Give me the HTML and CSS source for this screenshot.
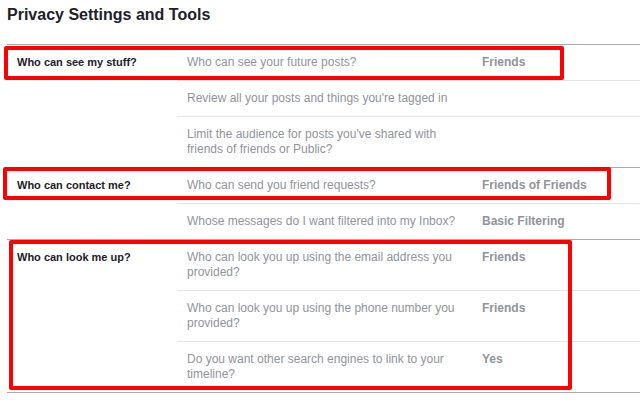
FILE: index.html
```html
<!DOCTYPE html>
<html lang="en">
<head>
<meta charset="utf-8">
<title>Privacy Settings and Tools</title>
<link rel="stylesheet" href="styles.css">
</head>
<body>
<div class="page">
  <h1 class="page-title">Privacy Settings and Tools</h1>

  <section class="group">
    <div class="group-label">Who can see my stuff?</div>
    <div class="items">
      <div class="item">
        <div class="item-text">Who can see your future posts?</div>
        <div class="item-value">Friends</div>
      </div>
      <div class="item">
        <div class="item-text">Review all your posts and things you're tagged in</div>
        <div class="item-value"></div>
      </div>
      <div class="item">
        <div class="item-text">Limit the audience for posts you've shared with friends of friends or Public?</div>
        <div class="item-value"></div>
      </div>
    </div>
  </section>

  <section class="group">
    <div class="group-label">Who can contact me?</div>
    <div class="items">
      <div class="item">
        <div class="item-text">Who can send you friend requests?</div>
        <div class="item-value">Friends of Friends</div>
      </div>
      <div class="item">
        <div class="item-text">Whose messages do I want filtered into my Inbox?</div>
        <div class="item-value">Basic Filtering</div>
      </div>
    </div>
  </section>

  <section class="group group-last">
    <div class="group-label">Who can look me up?</div>
    <div class="items">
      <div class="item">
        <div class="item-text">Who can look you up using the email address you provided?</div>
        <div class="item-value">Friends</div>
      </div>
      <div class="item">
        <div class="item-text">Who can look you up using the phone number you provided?</div>
        <div class="item-value">Friends</div>
      </div>
      <div class="item">
        <div class="item-text">Do you want other search engines to link to your timeline?</div>
        <div class="item-value">Yes</div>
      </div>
    </div>
  </section>

  <div class="mark mark-1"></div>
  <div class="mark mark-2"></div>
  <div class="mark mark-3"></div>
</div>
</body>
</html>
```

FILE: styles.css
```css
html, body {
  margin: 0;
  padding: 0;
  background: #ffffff;
}

body {
  font-family: "Liberation Sans", Arial, Helvetica, sans-serif;
  font-size: 12px;
  line-height: 15px;
  color: #1d2129;
}

.page {
  position: relative;
  width: 640px;
}

.page-title {
  margin: 0;
  height: 44px;
  box-sizing: border-box;
  padding: 5px 7px 0;
  font-size: 16px;
  line-height: 20px;
  font-weight: bold;
  color: #1d2129;
}

.group {
  margin-left: 7px;
  display: grid;
  grid-template-columns: 170px 1fr;
  border-top: 1px solid #aaaaaa;
}

.group-last {
  border-bottom: 1px solid #aaaaaa;
}

.group-label {
  padding: 10px 10px;
  font-size: 11px;
  line-height: 15px;
  font-weight: bold;
  color: #1d2129;
}

.items {
  display: flex;
  flex-direction: column;
}

.item {
  display: flex;
  border-top: 1px solid #e5e5e5;
}

.item:first-child {
  border-top: none;
}

.item-text {
  width: 280px;
  padding: 10px 15px 10px 10px;
  color: #90949c;
}

.item-value {
  padding: 10px 0;
  font-weight: bold;
  color: #90949c;
}

.mark {
  position: absolute;
  box-sizing: border-box;
  border: 4px solid #ff0000;
  border-radius: 2px;
}

.mark-1 {
  left: 4px;
  top: 46px;
  width: 560px;
  height: 34px;
}

.mark-2 {
  left: 3px;
  top: 167px;
  width: 608px;
  height: 33px;
}

.mark-3 {
  left: 9px;
  top: 240px;
  width: 563px;
  height: 150px;
}
```
